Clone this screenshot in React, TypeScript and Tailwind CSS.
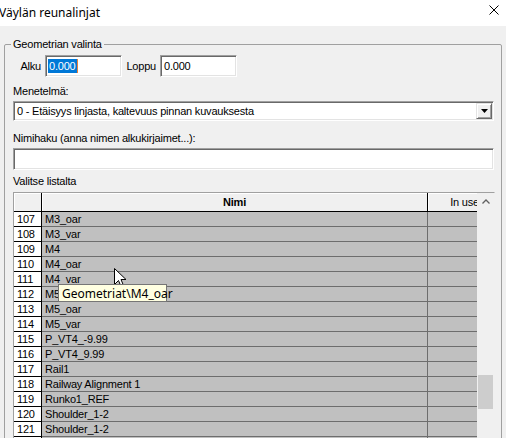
import React from 'react';

const rows: [number, string][] = [
  [107, 'M3_oar'], [108, 'M3_var'], [109, 'M4'], [110, 'M4_oar'], [111, 'M4_var'],
  [112, 'M5'], [113, 'M5_oar'], [114, 'M5_var'], [115, 'P_VT4_-9.99'], [116, 'P_VT4_9.99'],
  [117, 'Rail1'], [118, 'Railway Alignment 1'], [119, 'Runko1_REF'], [120, 'Shoulder_1-2'],
  [121, 'Shoulder_1-2'],
];

const sunken = 'border border-t-[#a0a0a0] border-l-[#a0a0a0] border-b-white border-r-white shadow-[inset_1px_1px_0_#696969,inset_-1px_-1px_0_#e3e3e3] bg-white';

export default function App() {
  return (
    <div className="relative w-[506px] h-[438px] overflow-hidden bg-[#f0f0f0] text-black font-['Liberation_Sans',Arial,sans-serif] text-[11px] leading-[13px] tracking-[-0.2px]">
      {/* title bar */}
      <div className="h-[26px] bg-white flex items-center justify-between tracking-normal">
        <span className="font-['Noto_Sans','Open_Sans',sans-serif] text-[12px] -ml-[1px] -mt-[2px]">Väylän reunalinjat</span>
        <svg width="10" height="10" viewBox="0 0 10 10" className="mr-[7px] -mt-[6px]">
          <path d="M0.5 0.5 L9.5 9.5 M9.5 0.5 L0.5 9.5" stroke="#000" strokeWidth="1" />
        </svg>
      </div>

      {/* group box */}
      <div className="relative mt-[18px] ml-[4px] w-[498px] h-[420px] border border-[#a0a0a0] rounded-[2px] pl-[8px] pr-[6px] pt-[10px]">
        <span className="absolute -top-[7px] left-[6px] px-[2px] bg-[#f0f0f0]">Geometrian valinta</span>

        <div className="flex items-center h-[22px]">
          <span className="w-[32px] text-right pr-[4px]">Alku</span>
          <div className={`${sunken} w-[77px] h-[22px] flex items-center pl-[2px]`}>
            <span className="bg-[#0078d7] text-white px-[1px] leading-[14px]">0.000</span>
            <span className="w-[1px] h-[14px] bg-[#e8803a]" />
          </div>
          <span className="w-[38px] text-right pr-[4px]">Loppu</span>
          <div className={`${sunken} w-[77px] h-[22px] flex items-center pl-[3px]`}>0.000</div>
        </div>

        <div className="h-[24px] pt-[8px]">Menetelmä:</div>
        <div className={`${sunken} w-[481px] h-[20px] flex items-center justify-between pl-[3px] pr-[1px]`}>
          <span>0 - Etäisyys linjasta, kaltevuus pinnan kuvauksesta</span>
          <div className="w-[16px] h-[16px] bg-[#f0f0f0] border border-t-[#e3e3e3] border-l-[#e3e3e3] border-b-[#696969] border-r-[#696969] shadow-[inset_1px_1px_0_#fff,inset_-1px_-1px_0_#a0a0a0] flex items-center justify-center">
            <svg width="7" height="4" viewBox="0 0 7 4"><path d="M0 0 H7 L3.5 4 Z" fill="#000" /></svg>
          </div>
        </div>

        <div className="h-[27px] pt-[11px]">Nimihaku (anna nimen alkukirjaimet...):</div>
        <div className={`${sunken} w-[481px] h-[22px]`} />

        <div className="h-[22px] pt-[5px]">Valitse listalta</div>

        {/* grid */}
        <div className="flex w-[482px] h-[260px] border border-[#a0a0a0] border-r-[#f0f0f0] overflow-hidden">
          <div className="flex flex-col w-[463px]">
            <div className="flex h-[19px] shrink-0 bg-[#f0f0f0] border-b border-black shadow-[inset_0_1px_0_#fff]">
              <div className="w-[28px] border-r border-black shadow-[inset_1px_0_0_#fff]" />
              <div className="w-[386px] border-r border-black flex items-center justify-center font-bold shadow-[inset_1px_0_0_#fff]">Nimi</div>
              <div className="w-[49px] flex items-center justify-end overflow-hidden shadow-[inset_1px_0_0_#fff]">
                <span className="-mr-[2px] whitespace-nowrap">In use</span>
              </div>
            </div>
            {rows.map(([n, name]) => (
              <div key={n} className="flex h-[15px] shrink-0 leading-[14px]">
                <div className="w-[28px] bg-white border-r border-b border-black pl-[3px]">{n}</div>
                <div className="w-[386px] bg-[#c0c0c0] border-r border-b border-[#6d6d6d] pl-[3px] whitespace-nowrap">{name}</div>
                <div className="w-[49px] bg-[#c0c0c0] border-b border-[#6d6d6d]" />
              </div>
            ))}
            <div className="flex h-[15px] shrink-0">
              <div className="w-[28px] bg-white border-r border-black" />
              <div className="w-[386px] bg-[#c0c0c0] border-r border-[#6d6d6d]" />
              <div className="w-[49px] bg-[#c0c0c0]" />
            </div>
          </div>
          {/* scrollbar */}
          <div className="w-[17px] bg-[#f0f0f0] flex flex-col">
            <div className="h-[17px] flex items-center justify-center">
              <svg width="8" height="5" viewBox="0 0 8 5"><path d="M0.5 4.5 L4 1 L7.5 4.5" stroke="#606060" strokeWidth="1.3" fill="none" /></svg>
            </div>
            <div className="h-[165px]" />
            <div className="mx-[1px] h-[34px] bg-[#cdcdcd]" />
          </div>
        </div>
      </div>

      {/* cursor */}
      <svg className="absolute left-[114px] top-[268px]" width="13" height="20" viewBox="0 0 13 20">
        <path d="M0.5 0.5 V16.5 L4.5 12.5 L7 18.5 L9.5 17.5 L7 11.5 H12 Z" fill="#fff" stroke="#000" strokeWidth="1" />
      </svg>

      {/* tooltip */}
      <div className="absolute left-[58px] top-[284px] w-[109px] h-[18px] bg-[#ffffe1] border border-[#767676] flex items-center pl-[3px] font-['Noto_Sans','Open_Sans',sans-serif] text-[12px] tracking-normal whitespace-nowrap">
        Geometriat\M4_oar
      </div>
    </div>
  );
}
